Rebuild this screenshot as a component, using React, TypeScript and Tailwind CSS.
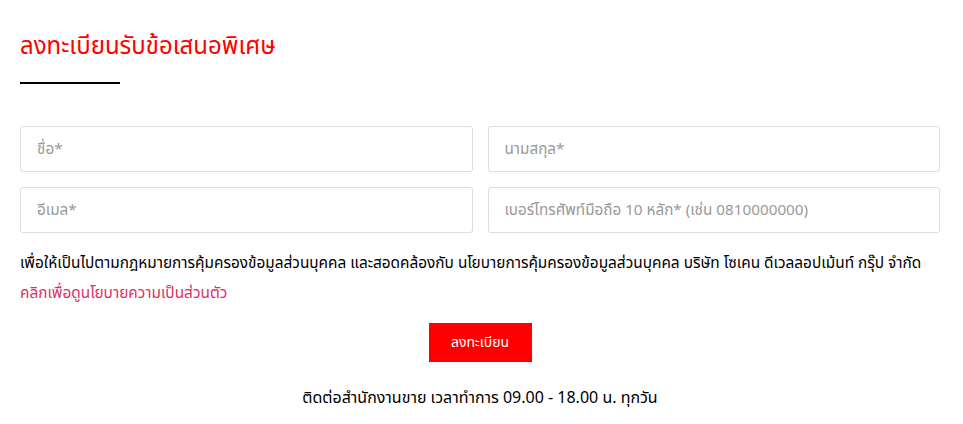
import React from 'react';

const fields = [
  { name: 'firstName', placeholder: 'ชื่อ*' },
  { name: 'lastName', placeholder: 'นามสกุล*' },
  { name: 'email', placeholder: 'อีเมล*' },
  { name: 'phone', placeholder: 'เบอร์โทรศัพท์มือถือ 10 หลัก* (เช่น 0810000000)' },
];

const App: React.FC = () => {
  return (
    <div
      className="min-h-screen bg-white pl-5 pt-[30px] text-black"
      style={{ fontFamily: '"Noto Sans Thai", "Noto Sans", "Liberation Sans", sans-serif' }}
    >
      <div className="w-[920px]">
        <h2 className="text-[24px] leading-[34px] text-[#ff0000]">ลงทะเบียนรับข้อเสนอพิเศษ</h2>
        <div className="mt-[18px] h-[2px] w-[100px] bg-black" />

        <form className="mt-[42px]" onSubmit={(e) => e.preventDefault()}>
          <div className="grid grid-cols-2 gap-x-[15px] gap-y-[15px]">
            {fields.map((f) => (
              <input
                key={f.name}
                name={f.name}
                placeholder={f.placeholder}
                className="h-[46px] w-full rounded-[3px] border border-[#dddddd] bg-white px-4 text-[15.25px] text-gray-700 outline-none placeholder:text-[#999999]"
              />
            ))}
          </div>

          <p className="mt-[16px] whitespace-nowrap text-[15.4px] leading-[30px]">
            เพื่อให้เป็นไปตามกฎหมายการคุ้มครองข้อมูลส่วนบุคคล และสอดคล้องกับ นโยบายการคุ้มครองข้อมูลส่วนบุคคล บริษัท โซเคน ดีเวลลอปเม้นท์ กรุ๊ป จำกัด
            <br />
            <a href="#" className="text-[#dc3163]">คลิกเพื่อดูนโยบายความเป็นส่วนตัว</a>
          </p>

          <div className="mt-[14px] flex justify-center">
            <button type="submit" className="h-[39px] w-[103px] bg-[#ff0000] text-[14px] text-white">
              ลงทะเบียน
            </button>
          </div>
        </form>

        <p className="mt-[24px] text-center text-[16px]">ติดต่อสำนักงานขาย เวลาทำการ 09.00 - 18.00 น. ทุกวัน</p>
      </div>
    </div>
  );
};

export default App;
